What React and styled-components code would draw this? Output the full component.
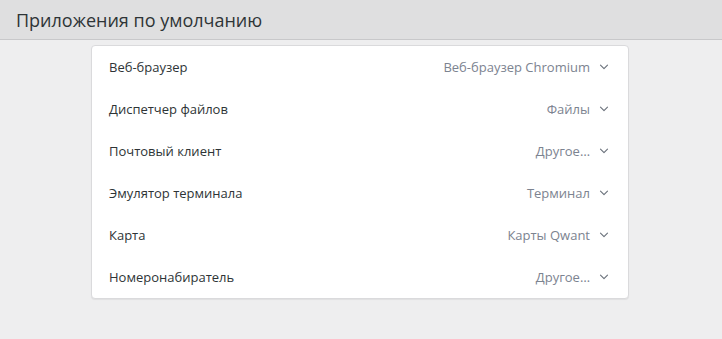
import React from 'react'
import styled, { createGlobalStyle } from 'styled-components'

const GlobalStyle = createGlobalStyle`
    html, body {
        margin: 0;
        padding: 0;
        background: #eeeeef;
        font-family: "Open Sans", "Noto Sans", sans-serif;
    }
`;

const apps = [
    { label: 'Веб-браузер', value: 'Веб-браузер Chromium' },
    { label: 'Диспетчер файлов', value: 'Файлы' },
    { label: 'Почтовый клиент', value: 'Другое…' },
    { label: 'Эмулятор терминала', value: 'Терминал' },
    { label: 'Карта', value: 'Карты Qwant' },
    { label: 'Номеронабиратель', value: 'Другое…' },
];

function Chevron() {
    return (
        <svg width="10" height="6" viewBox="0 0 10 6" fill="none">
            <path d="M1.5 1.2l3.5 3.5 3.5-3.5" stroke="#6a717b" strokeWidth="1.1" strokeLinecap="round" strokeLinejoin="round" />
        </svg>
    )
}

function App() {
    return (
        <Page>
            <GlobalStyle />
            <Header>
                <h1>Приложения по умолчанию</h1>
            </Header>
            <Card>
                {apps.map((app, i) => (
                    <Row key={i}>
                        <span className="label">{app.label}</span>
                        <span className="value">
                            {app.value}
                            <Chevron />
                        </span>
                    </Row>
                ))}
            </Card>
        </Page>
    )
}

const Page = styled.div`
    width: 722px;
    height: 339px;
    background: #eeeeef;
    overflow: hidden;
`;

const Header = styled.div`
    height: 39px;
    background: #dfdfe0;
    border-bottom: 1px solid #c8c8ca;
    display: flex;
    align-items: center;
    padding-left: 16px;

    h1 {
        margin: 0;
        font-size: 18px;
        font-weight: 400;
        color: #2e3436;
    }
`;

const Card = styled.div`
    margin: 5px 0 0 91px;
    width: 536px;
    background: #fff;
    border: 1px solid #dadadc;
    border-radius: 4px;
    box-shadow: 0 1px 1px rgba(0, 0, 0, 0.06);
    display: flex;
    flex-direction: column;
`;

const Row = styled.div`
    height: 42px;
    display: flex;
    align-items: center;
    justify-content: space-between;
    padding: 0 19px 0 17px;
    font-size: 13px;

    .label {
        color: #2e3436;
    }

    .value {
        display: flex;
        align-items: center;
        gap: 9px;
        color: #7c8390;
    }
`;

export default App
